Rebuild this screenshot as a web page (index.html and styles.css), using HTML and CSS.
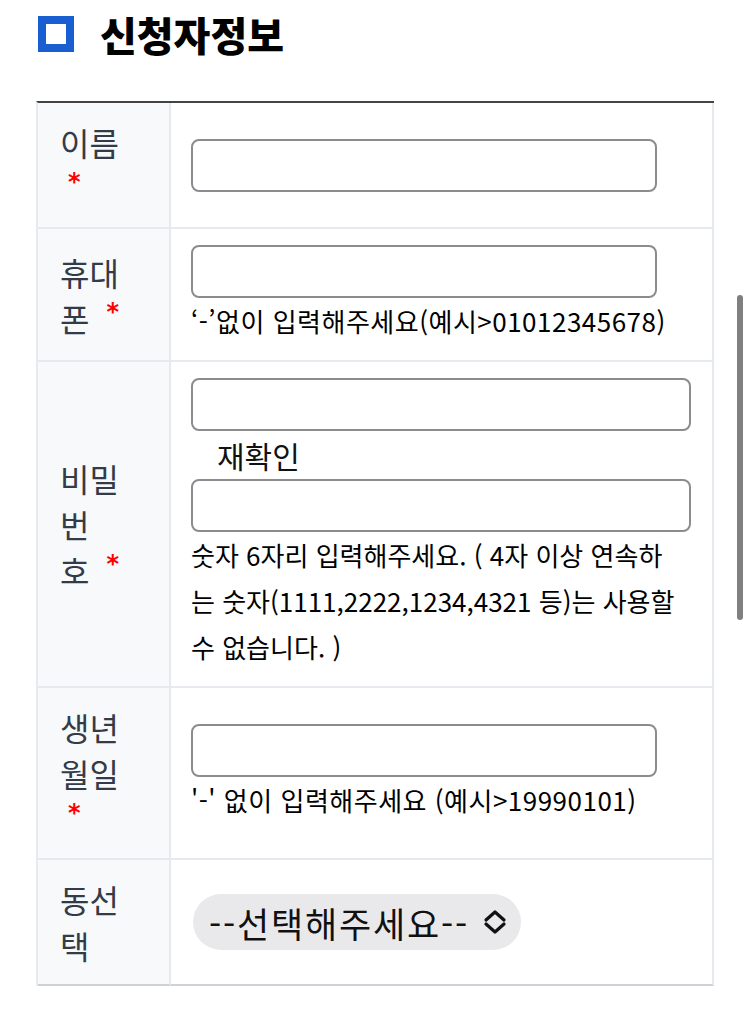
FILE: index.html
```html
<!DOCTYPE html>
<html lang="ko">
<head>
    <meta charset="UTF-8">
    <meta name="viewport" content="width=device-width, initial-scale=1.0">
    <title>신청자정보</title>
    <link rel="stylesheet" href="styles.css">
</head>
<body>
    <div class="section">
        <h2 class="sec-title"><span class="sec-icon"></span>신청자정보</h2>

        <!-- 신청자 입력 테이블 -->
        <table class="form-table">
            <tr>
                <th>이름 <span class="req">*</span></th>
                <td><input type="text" class="inp" name="name"></td>
            </tr>
            <tr>
                <th>휴대폰 <span class="req">*</span></th>
                <td>
                    <input type="tel" class="inp" name="phone">
                    <p class="hint">‘-’없이 입력해주세요(예시&gt;01012345678)</p>
                </td>
            </tr>
            <tr>
                <th>비밀번호&nbsp;<span class="req">*</span></th>
                <td>
                    <input type="password" class="inp inp-full" name="pw">
                    <div class="sub-label">재확인</div>
                    <input type="password" class="inp inp-full" name="pw2">
                    <p class="hint hint-long">숫자 6자리 입력해주세요. ( 4자 이상 연속하는 숫자(1111,2222,1234,4321 등)는 사용할 수 없습니다. )</p>
                </td>
            </tr>
            <tr>
                <th>생년월일 <span class="req">*</span></th>
                <td>
                    <input type="text" class="inp" name="birth">
                    <p class="hint">'-' 없이 입력해주세요 (예시&gt;19990101)</p>
                </td>
            </tr>
            <tr>
                <th>동선택</th>
                <td>
                    <div class="select-box">
                        <select name="dong">
                            <option>--선택해주세요--</option>
                        </select>
                        <svg class="select-arrow" viewBox="0 0 24 26" width="24" height="26">
                            <path d="M3 11 L12 3 L21 11 M3 15 L12 23 L21 15" fill="none" stroke="#111" stroke-width="3.2" stroke-linecap="round" stroke-linejoin="round"/>
                        </svg>
                    </div>
                </td>
            </tr>
        </table>
    </div>

    <div class="scroll-thumb"></div>
</body>
</html>
```

FILE: styles.css
```css
body {
    margin: 0;
    padding: 0;
    background-color: #ffffff;
    font-family: "Noto Sans CJK KR", "Noto Sans", sans-serif;
    color: #111;
}
.sec-title {
    display: flex;
    align-items: center;
    gap: 26px;
    margin: 0 0 43px 0;
    padding: 10px 0 0 38px;
    font-size: 40px;
    line-height: 48px;
    font-weight: 900;
    color: #000;
}
.sec-icon {
    width: 36px;
    height: 36px;
    box-sizing: border-box;
    border: 8px solid #1a5fd2;
    background-color: #fff;
}
.form-table {
    margin-left: 36px;
    width: 678px;
    table-layout: fixed;
    border-collapse: separate;
    border-spacing: 0;
    border-top: 2px solid #444;
    border-left: 2px solid #e6e9ed;
}
.form-table th, .form-table td {
    border-right: 2px solid #e6e9ed;
    border-bottom: 2px solid #e6e9ed;
    vertical-align: middle;
    text-align: left;
}
.form-table tr:last-child th, .form-table tr:last-child td {
    border-bottom-color: #cdd1d6;
}
.form-table th {
    width: 133px;
    box-sizing: border-box;
    padding: 16px 43px 16px 22px;
    background-color: #f8f9fb;
    color: #333b48;
    font-size: 32px;
    line-height: 46px;
    font-weight: 400;
}
.form-table td {
    padding: 16px 21px 16px 20px;
}
.req {
    margin-left: 8px;
    color: #ff0000;
    font-family: "DejaVu Sans", sans-serif;
    font-weight: 700;
    font-size: 24px;
    line-height: 1;
    vertical-align: 12px;
}
.inp {
    display: block;
    width: 466px;
    height: 53px;
    box-sizing: border-box;
    border: 2px solid #8c8c90;
    border-radius: 8px;
    background: #fff;
    padding: 0 12px;
    font-size: 24px;
    font-family: inherit;
}
.inp-full {
    width: 100%;
}
.sub-label {
    padding-left: 26px;
    font-size: 30px;
    line-height: 48px;
    color: #111;
}
.hint {
    margin: 0;
    font-size: 26px;
    line-height: 46px;
    letter-spacing: 0.5px;
    color: #000;
}
.hint-long {
    max-width: 486px;
    letter-spacing: 0;
}
.select-box {
    position: relative;
    display: inline-block;
    margin-left: 2px;
}
.select-box select {
    -webkit-appearance: none;
    appearance: none;
    width: 328px;
    height: 56px;
    border: none;
    border-radius: 28px;
    background-color: #e9e9eb;
    padding: 0 48px 0 16px;
    font-family: inherit;
    font-size: 35px;
    letter-spacing: 1.8px;
    color: #111;
}
.select-arrow {
    position: absolute;
    right: 14px;
    top: 15px;
    pointer-events: none;
}
.scroll-thumb {
    position: fixed;
    left: 737px;
    top: 295px;
    width: 6px;
    height: 325px;
    border-radius: 3px;
    background-color: #808080;
}
```
